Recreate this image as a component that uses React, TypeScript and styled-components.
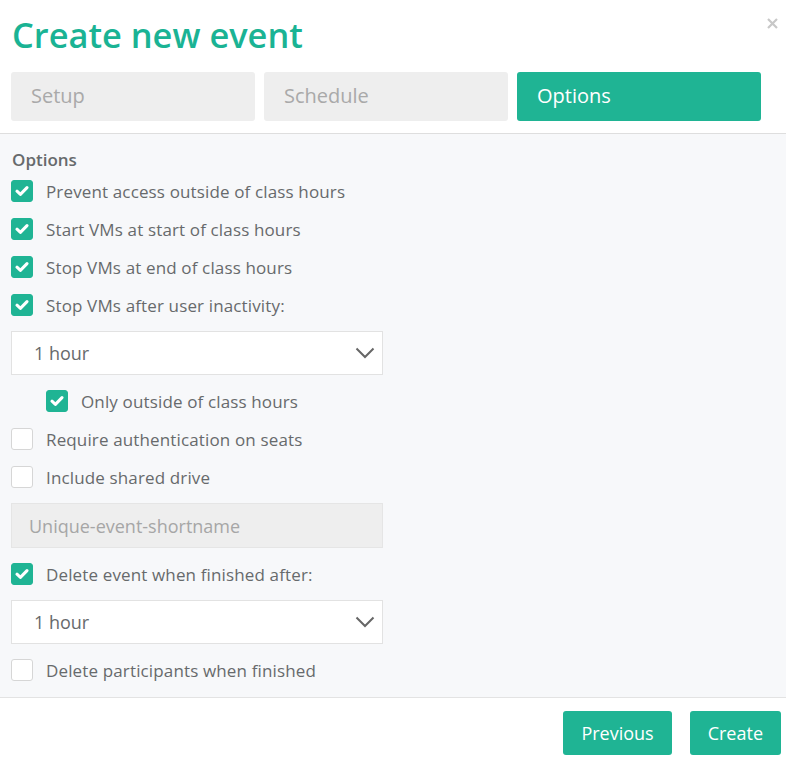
import React from "react";
import styled, { createGlobalStyle } from "styled-components";

const GlobalStyle = createGlobalStyle`
  body {
    margin: 0;
    background: #fff;
    font-family: "Open Sans", "Noto Sans", sans-serif;
  }
`;

const Modal = styled.div`
  width: 786px;
  height: 766px;
  display: flex;
  flex-direction: column;
  background: #fff;
  overflow: hidden;
`;

const Header = styled.header`
  position: relative;
  padding: 14px 25px 12px 11px;
  border-bottom: 1px solid #dedede;
`;

const Title = styled.h1`
  margin: 0 0 17px 1px;
  font-size: 34.4px;
  line-height: 41px;
  font-weight: 600;
  color: #1ab394;
`;

const CloseButton = styled.button`
  position: absolute;
  top: 13px;
  right: 4px;
  width: 20px;
  height: 20px;
  padding: 0;
  border: none;
  background: none;
  display: flex;
  align-items: center;
  justify-content: center;
  cursor: pointer;
`;

const Tabs = styled.div`
  display: grid;
  grid-template-columns: repeat(3, 244px);
  gap: 9px;
`;

const Tab = styled.div<{ $active?: boolean }>`
  height: 49px;
  box-sizing: border-box;
  display: flex;
  align-items: center;
  padding: 0 0 2px 20px;
  border-radius: 3px;
  font-size: 20px;
  background: ${(p) => (p.$active ? "#1fb494" : "#eeeeee")};
  color: ${(p) => (p.$active ? "#fff" : "#a9a9a9")};
`;

const Body = styled.section`
  background: #f7f8fa;
  padding: 13px 11px 15px;
  display: flex;
  flex-direction: column;
  gap: 14px;
  border-bottom: 1px solid #e3e3e3;
`;

const SectionLabel = styled.div`
  font-size: 17px;
  line-height: 24px;
  font-weight: 600;
  color: #676a6c;
  margin: 1px 0 -7px 1px;
`;

const Row = styled.label<{ $indent?: boolean }>`
  display: flex;
  align-items: center;
  gap: 13px;
  height: 24px;
  padding-left: ${(p) => (p.$indent ? "35px" : "0")};
  font-size: 17px;
  letter-spacing: 0.14px;
  color: #676a6c;
`;

const Box = styled.span<{ $checked?: boolean }>`
  width: 22px;
  height: 22px;
  flex: none;
  box-sizing: border-box;
  border-radius: 3px;
  display: flex;
  align-items: center;
  justify-content: center;
  background: ${(p) => (p.$checked ? "#1fb494" : "#fff")};
  border: 1px solid ${(p) => (p.$checked ? "#1fb494" : "#d6d6d6")};
`;

const SelectBox = styled.div`
  width: 372px;
  height: 44px;
  box-sizing: border-box;
  display: flex;
  align-items: center;
  justify-content: space-between;
  padding: 0 7px 0 22px;
  background: #fff;
  border: 1px solid #e2e2e2;
  font-size: 18px;
  color: #676a6c;
`;

const TextInput = styled.div`
  width: 372px;
  height: 45px;
  box-sizing: border-box;
  display: flex;
  align-items: center;
  padding-left: 17px;
  background: #eeeeee;
  border: 1px solid #e5e5e5;
  font-size: 18px;
  color: #a6a6a6;
`;

const Footer = styled.footer`
  flex: 1;
  display: flex;
  justify-content: flex-end;
  align-items: flex-start;
  gap: 18px;
  padding: 13px 5px 0;
`;

const Button = styled.button`
  height: 44px;
  padding: 0 18px;
  border: none;
  border-radius: 3px;
  background: #1fb494;
  color: #fff;
  font-family: inherit;
  font-size: 18px;
  cursor: pointer;
`;

const Check = () => (
  <svg width="14" height="12" viewBox="0 0 14 12">
    <path d="M2 6.2 L5.4 9.4 L12 2.6" fill="none" stroke="#fff" strokeWidth="3" strokeLinecap="round" strokeLinejoin="round" />
  </svg>
);

const Chevron = () => (
  <svg width="20" height="12" viewBox="0 0 20 12">
    <path d="M1.5 1.5 L10 10 L18.5 1.5" fill="none" stroke="#666" strokeWidth="2" />
  </svg>
);

const Option: React.FC<{ label: string; checked?: boolean; indent?: boolean }> = ({ label, checked, indent }) => (
  <Row $indent={indent}>
    <Box $checked={checked}>{checked && <Check />}</Box>
    {label}
  </Row>
);

const App: React.FC = () => {
  return (
    <Modal>
      <GlobalStyle />
      <Header>
        <Title>Create new event</Title>
        <CloseButton aria-label="close">
          <svg width="11" height="11" viewBox="0 0 11 11">
            <path d="M1 1 L10 10 M10 1 L1 10" stroke="#c8c8c8" strokeWidth="2.2" />
          </svg>
        </CloseButton>
        <Tabs>
          <Tab>Setup</Tab>
          <Tab>Schedule</Tab>
          <Tab $active>Options</Tab>
        </Tabs>
      </Header>
      <Body>
        <SectionLabel>Options</SectionLabel>
        <Option checked label="Prevent access outside of class hours" />
        <Option checked label="Start VMs at start of class hours" />
        <Option checked label="Stop VMs at end of class hours" />
        <Option checked label="Stop VMs after user inactivity:" />
        <SelectBox>
          1 hour
          <Chevron />
        </SelectBox>
        <Option checked indent label="Only outside of class hours" />
        <Option label="Require authentication on seats" />
        <Option label="Include shared drive" />
        <TextInput>Unique-event-shortname</TextInput>
        <Option checked label="Delete event when finished after:" />
        <SelectBox>
          1 hour
          <Chevron />
        </SelectBox>
        <Option label="Delete participants when finished" />
      </Body>
      <Footer>
        <Button>Previous</Button>
        <Button>Create</Button>
      </Footer>
    </Modal>
  );
};

export default App;
